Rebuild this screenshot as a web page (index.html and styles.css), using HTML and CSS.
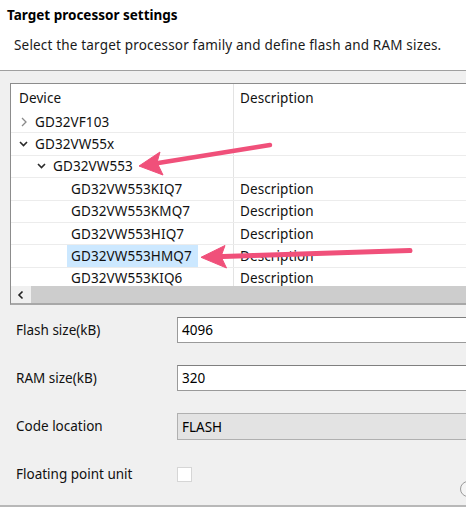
FILE: index.html
```html
<!DOCTYPE html>
<html>
<head>
<meta charset="utf-8">
<link rel="stylesheet" href="styles.css">
</head>
<body>
<div class="page">
  <header class="banner">
    <h1 class="title">Target processor settings</h1>
    <p class="subtitle">Select the target processor family and define flash and RAM sizes.</p>
  </header>
  <main class="content">
    <div class="tree">
      <div class="tree-view">
        <div class="tree-head">
          <div class="cell c1 head1">Device</div>
          <div class="cell c2">Description</div>
        </div>
        <div class="tree-row">
          <div class="cell c1 lvl0"><span class="twisty"><svg width="10" height="10" viewBox="0 0 10 10"><polyline class="chev-closed" points="3,1 7,5 3,9"/></svg></span>GD32VF103</div>
          <div class="cell c2"></div>
        </div>
        <div class="tree-row">
          <div class="cell c1 lvl0"><span class="twisty"><svg width="10" height="10" viewBox="0 0 10 10"><polyline class="chev-open" points="1,3 4.5,6.5 8,3"/></svg></span>GD32VW55x</div>
          <div class="cell c2"></div>
        </div>
        <div class="tree-row">
          <div class="cell c1 lvl1"><span class="twisty"><svg width="10" height="10" viewBox="0 0 10 10"><polyline class="chev-open" points="1,3 4.5,6.5 8,3"/></svg></span>GD32VW553</div>
          <div class="cell c2"></div>
        </div>
        <div class="tree-row">
          <div class="cell c1 lvl2">GD32VW553KIQ7</div>
          <div class="cell c2">Description</div>
        </div>
        <div class="tree-row">
          <div class="cell c1 lvl2">GD32VW553KMQ7</div>
          <div class="cell c2">Description</div>
        </div>
        <div class="tree-row">
          <div class="cell c1 lvl2">GD32VW553HIQ7</div>
          <div class="cell c2">Description</div>
        </div>
        <div class="tree-row">
          <div class="cell c1 lvl2"><span class="selected">GD32VW553HMQ7</span></div>
          <div class="cell c2">Description</div>
        </div>
        <div class="tree-row">
          <div class="cell c1 lvl2">GD32VW553KIQ6</div>
          <div class="cell c2">Description</div>
        </div>
      </div>
      <div class="hscroll">
        <span class="hbtn"><svg width="8" height="10" viewBox="0 0 8 10"><polyline points="5.5,1.5 2,5 5.5,8.5"/></svg></span>
        <span class="hthumb"></span>
      </div>
    </div>

    <div class="form">
      <label class="flabel">Flash size(kB)</label>
      <div class="field">4096</div>
      <label class="flabel">RAM size(kB)</label>
      <div class="field">320</div>
      <label class="flabel">Code location</label>
      <div class="field disabled">FLASH</div>
      <label class="flabel">Floating point unit</label>
      <div class="check-cell">
        <span class="checkbox"></span>
        <span class="round-btn"></span>
      </div>
    </div>
    <div class="bottom-rule"></div>
  </main>

  <svg class="arrows" width="466" height="507" viewBox="0 0 466 507">
    <line x1="270" y1="145" x2="152" y2="164" class="arrow-line"/>
    <polygon class="arrow-head" points="139,166 160,152 157,162.5 163,175"/>
    <line x1="410" y1="250.5" x2="215" y2="256.8" class="arrow-line thick"/>
    <polygon class="arrow-head" points="201,257.3 225,245.5 221,256.5 226.5,268"/>
  </svg>
</div>
</body>
</html>
```

FILE: styles.css
```css
* { box-sizing: border-box; }

html, body {
  margin: 0;
  padding: 0;
}

body {
  width: 466px;
  height: 507px;
  overflow: hidden;
  background: #f0f0f0;
  font-family: "Noto Sans", "Open Sans", sans-serif;
  font-size: 13.5px;
  color: #111;
}

.page {
  position: relative;
  height: 507px;
  overflow: hidden;
}

.banner {
  background: #fff;
  height: 71px;
  border-bottom: 1px solid #a0a0a0;
  padding: 4px 0 0 7px;
}

.title {
  margin: 0;
  font-size: 13.5px;
  font-weight: 700;
  line-height: 22px;
  color: #000;
}

.subtitle {
  margin: 9px 0 0 7px;
  line-height: 20px;
  color: #1a1a1a;
  letter-spacing: 0.18px;
}

.content {
  padding-top: 12px;
}

.tree {
  margin-left: 10px;
  width: 470px;
  height: 222px;
  border: 1px solid #8c8c8c;
  border-bottom: 2px solid #a8a8a8;
  background: #fff;
  display: flex;
  flex-direction: column;
}

.tree-view {
  height: 203px;
  overflow: hidden;
}

.tree-head {
  display: grid;
  grid-template-columns: 222px 1fr;
  height: 27px;
}

.tree-head .cell {
  padding-top: 1px;
}

.tree-row {
  display: grid;
  grid-template-columns: 222px 1fr;
  height: 22.4px;
  border-bottom: 1px solid #ececec;
}

.cell {
  display: flex;
  align-items: center;
  white-space: nowrap;
  overflow: hidden;
  letter-spacing: 0.1px;
}

.c1 { padding-left: 8px; }
.c2 {
  padding-left: 6px;
  border-left: 1px solid #e3e3e3;
}

.lvl0 { padding-left: 8px; }
.lvl1 { padding-left: 26px; }
.lvl2 { padding-left: 60px; }

.twisty {
  width: 16px;
  height: 10px;
  flex: none;
  display: flex;
  align-items: center;
}

.twisty svg { display: block; }

.chev-closed {
  fill: none;
  stroke: #8a8a8a;
  stroke-width: 1.3;
}

.chev-open {
  fill: none;
  stroke: #2a2a2a;
  stroke-width: 1.6;
}

.selected {
  background: #cce8ff;
  margin-left: -4px;
  padding: 0 4px;
  height: 22px;
  display: flex;
  align-items: center;
  width: 131px;
}

.hscroll {
  height: 17px;
  display: flex;
}

.hbtn {
  width: 20px;
  background: #f0f0f0;
  display: flex;
  align-items: center;
  justify-content: center;
}

.hbtn svg { display: block; }

.hbtn polyline {
  fill: none;
  stroke: #222;
  stroke-width: 1.6;
}

.hthumb {
  flex: 1;
  background: #cdcdcd;
}

.form {
  margin-top: 12px;
  padding-left: 16px;
  display: grid;
  grid-template-columns: 161px minmax(0, 1fr);
  grid-auto-rows: 26px;
  row-gap: 22px;
}

.flabel {
  display: flex;
  align-items: center;
  color: #111;
}

.field {
  width: 300px;
  height: 26px;
  border: 1px solid #9a9a9a;
  border-top-color: #7f7f7f;
  background: #fff;
  padding-left: 4px;
  display: flex;
  align-items: center;
  color: #000;
}

.field.disabled {
  background: #e3e3e3;
  border-color: #b0b0b0;
  height: 27px;
}

.check-cell {
  display: flex;
  justify-content: space-between;
  align-items: flex-start;
}

.checkbox {
  width: 15px;
  height: 15px;
  margin-top: 6px;
  background: #fff;
  border: 1px solid #d6d6d6;
}

.round-btn {
  width: 16px;
  height: 16px;
  margin-top: 20px;
  margin-right: -10px;
  border: 1px solid #9a9a9a;
  border-radius: 50%;
  background: #f4f4f4;
}

.bottom-rule {
  margin-top: 18px;
  height: 2px;
  background: #b8b8b8;
}

.arrows {
  position: absolute;
  left: 0;
  top: 0;
  pointer-events: none;
}

.arrow-line {
  stroke: #f0507a;
  stroke-width: 4.5;
  stroke-linecap: round;
}

.arrow-line.thick { stroke-width: 5; }

.arrow-head {
  fill: #f0507a;
  stroke: #f0507a;
  stroke-width: 1;
  stroke-linejoin: round;
}
```
